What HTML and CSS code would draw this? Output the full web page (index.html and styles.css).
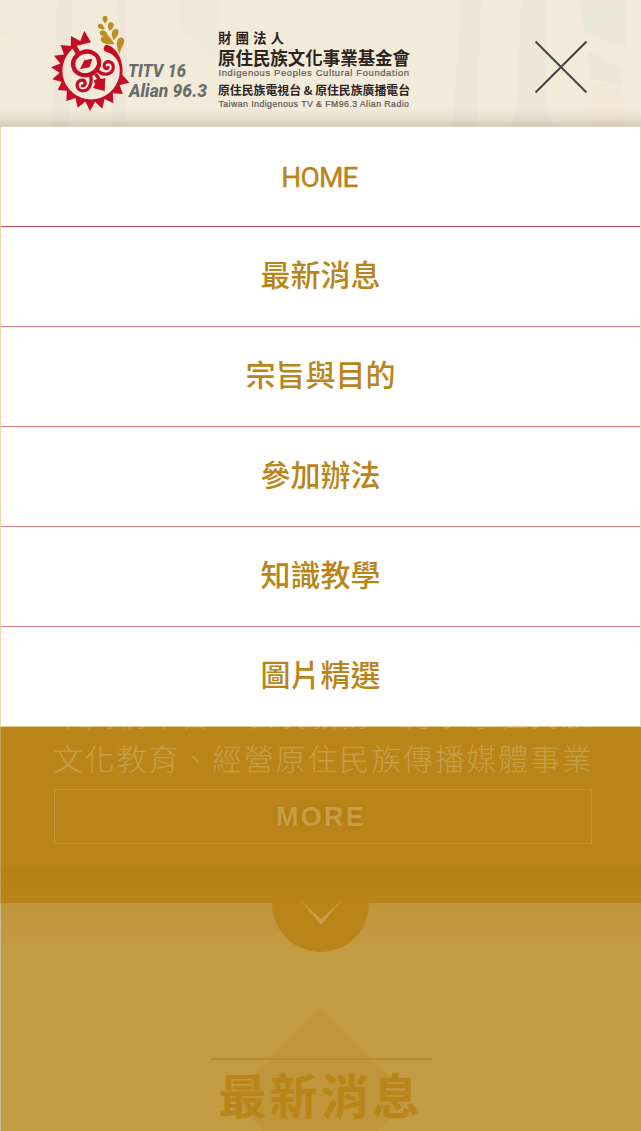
FILE: index.html
```html
<!DOCTYPE html>
<html lang="zh-Hant">
<head>
<meta charset="utf-8">
<title>原住民族文化事業基金會</title>
<link rel="stylesheet" href="styles.css">
</head>
<body>
<header class="header">
  <svg class="pattern" width="641" height="126" viewBox="0 0 641 126" aria-hidden="true">
    <g fill="#eee6d9">
      <path d="M57 0h15l-3 126H52zM117 0h10v126h-16zM461 0h20l-4 126h-24zM521 0h25l-1 98 9 28h-44l7-20zM579 0h46v49l-40-17zM587 50l37 20-2 16-31-8z"/>
      <path d="M178 0h42v58l-17-9-25-22z" opacity=".65"/>
    </g>
    <path d="M583 22l41-20v13l-40 18z" fill="#ebe9d9"/>
    <path d="M591 84h31l2 42h-33zM0 32l19 2v3H0zM0 43l15-3v3L0 48z" fill="#f3e7d6"/>
  </svg>
  <a class="logo" href="#">
    <svg width="370" height="105" viewBox="45 10 370 105" role="img" aria-label="TITV 16 Alian 96.3">
      <g fill="#c40d24">
        <path d="M91 42.3 84.3 30.7 80.2 41 71 36 70.7 46 60.7 45 64 54.4 54 55.7 60.3 63.5 51 67.3 59.6 72.8 52.3 79.3 61.6 81.9 57.7 90 66.9 90.8 66.3 101 75.5 98 77.7 107.7 85.3 101.6 90 111 95.1 101.8 102.3 108.7 104.6 99 113.3 103.3 112.9 93.2 122.8 94 119.6 85 129.5 82.7 122.4 75C124 62 118 49 108.5 45.2A3.4 3.4 0 0 0 106 51.8C114 54 120 61 119.8 70.5A28.7 28.7 0 1 1 77 45.7L91 42.3Z"/>
        <path d="M80 69 84.3 60.3 92.5 58.7 89.5 67.3zM93.8 80.5 97 79 94 75 97 73 101 79 105.2 78 104.7 91 93 88 95 84z"/>
      </g>
      <g fill="none" stroke="#c40d24" stroke-linecap="round">
        <ellipse cx="86.1" cy="63.4" rx="13.2" ry="11.7" stroke-width="4.3" transform="rotate(-18 86 63.4)"/>
        <path d="M74 46l4 7" stroke-width="5" stroke-linecap="butt"/>
        <path d="M98 71C104 76.5 113 74.5 113.3 67.3 113.5 60 104 60 104.2 65.6 104.3 69 107.3 69.2 108 67.4" stroke-width="3.2"/>
        <path d="M91 77C92 85 88.5 91 82.8 90.8 75.5 90.6 75.3 80.5 81.5 80.2 86 80 86.5 86 82.4 86" stroke-width="3.2"/>
      </g>
      <g fill="#c08c1d">
        <path d="M105 23.5C103 21 102.3 19.5 102.5 18a2.6 2.6 0 0 1 5.1 0c.2 2-.8 4-2.6 5.5zM105 29.3C101 29.5 98 28.5 97.8 26c-.1-2.4 2.8-3.4 5-.9zM109.5 30.5C107.4 27 107.3 23.5 109.5 22.5c2.5-.8 5 1 4.2 3.5-.5 2-2.3 3.5-4.2 4.5zM109 36.5C104 37 99.8 35.8 99.7 32.8c0-2.8 4-3.6 6.3-.7zM113.5 40.5C111 35 111.2 30 115 29.1c3.7-.5 4.6 3.2 2.4 6.7zM114.5 44C107 45 100.7 42.8 100.6 39.2c.1-3.8 7-4.3 10-.9zM119.8 54.2C116 46 115.7 39.5 120 37.5c4.2-.8 5.4 3.5 3 7.7-2 3.5-3 6-3.2 9z"/>
      </g>
      <g class="mark-name" fill="#6b6b6c">
        <text x="128" y="77" font-size="18.8" textLength="58" lengthAdjust="spacingAndGlyphs">TITV 16</text>
        <text x="129" y="96.5" font-size="18.8" textLength="78" lengthAdjust="spacingAndGlyphs">Alian 96.3</text>
      </g>
      <g class="org-name" fill="#2d2322">
        <text x="218" y="42.5" font-size="13.5" textLength="66">財團法人</text>
        <text x="218" y="64.5" font-size="18" textLength="192" lengthAdjust="spacingAndGlyphs">原住民族文化事業基金會</text>
        <text x="218" y="95.3" font-size="12" textLength="192" lengthAdjust="spacingAndGlyphs">原住民族電視台 &amp; 原住民族廣播電台</text>
      </g>
      <g class="org-latin" fill="#5c5651" stroke="#5c5651" stroke-width=".2">
        <text x="218.5" y="76" font-size="9.4" textLength="190.5">Indigenous Peoples Cultural Foundation</text>
        <text x="218.5" y="106.5" font-size="8.8" textLength="190.5">Taiwan Indigenous TV &amp; FM96.3 Alian Radio</text>
      </g>
    </svg>
  </a>
  <button class="close" aria-label="關閉">
    <svg width="54" height="54" viewBox="0 0 54 54"><path d="M1.5 1.5 52.5 52.5M52.5 1.5 1.5 52.5" stroke="#454545" stroke-width="2"/></svg>
  </button>
</header>
<nav class="menu">
  <a class="item home" href="#">HOME</a>
  <a class="item" href="#">最新消息</a>
  <a class="item" href="#">宗旨與目的</a>
  <a class="item" href="#">參加辦法</a>
  <a class="item" href="#">知識教學</a>
  <a class="item" href="#">圖片精選</a>
</nav>
<section class="about">
  <p class="copy">本高構平台，以及服務，傳承原住民族<br>文化教育、經營原住民族傳播媒體事業</p>
  <a class="more" href="#">MORE</a>
</section>
<section class="news">
  <div class="down"><svg width="42" height="25" viewBox="0 0 42 25"><path d="M0 0 21 19 42 0 21 25z" fill="#c89d45"/></svg></div>
  <svg class="diamond" width="180" height="123" viewBox="0 0 180 123"><path d="M90 0 180 90 147 123H33L0 90z" fill="#c1953a"/></svg>
  <h2 class="title">最新消息</h2>
</section>
</body>
</html>
```
FILE: styles.css
```css
* { box-sizing: border-box; }
body {
  margin: 0;
  height: 1131px;
  overflow: hidden;
  display: flex;
  flex-direction: column;
  background: #b98519;
  font-family: "Noto Sans CJK TC", "Liberation Sans", sans-serif;
}
a { color: inherit; text-decoration: none; }
.header {
  position: relative;
  flex: none;
  height: 127px;
  padding: 10px 53px 0 45px;
  display: flex;
  justify-content: space-between;
  background: #f3ebda;
  border-bottom: 1px solid #dcd2bd;
}
.header::after {
  content: "";
  position: absolute;
  inset: auto 0 0;
  height: 18px;
  background: linear-gradient(rgba(190, 180, 160, 0), rgba(190, 180, 160, .2) 55%, rgba(190, 180, 160, .6));
}
.pattern { position: absolute; left: 0; top: 0; }
.logo, .close { position: relative; }
.logo svg, .close svg { display: block; }
.close { margin-top: 30px; padding: 0; width: 54px; height: 54px; border: 0; background: none; }
.mark-name { font-family: Roboto, "Liberation Sans", sans-serif; font-weight: 800; font-style: italic; }
.org-name { font-weight: 700; }
.org-latin { font-family: "Liberation Sans", sans-serif; }
.menu {
  flex: none;
  background: #fff;
  border: solid #ead6a8;
  border-width: 0 1px;
  color: #b98519;
}
.item {
  display: flex;
  align-items: center;
  justify-content: center;
  height: 100px;
  padding: 0 0 8px;
  border-bottom: 1px solid #d98080;
  font-size: 30px;
  line-height: 44px;
  font-weight: 500;
}
.item:first-child { border-color: #ce4a50; }
.item:last-child { border-color: #e2cb98; }
.home {
  padding: 2px 2px 0 0;
  font-family: Roboto, "Liberation Sans", sans-serif;
  font-size: 28px;
  font-weight: 400;
  letter-spacing: -.8px;
  -webkit-text-stroke: .4px #b98519;
}
.about {
  flex: none;
  height: 176px;
  padding: 0 49px 0 53px;
  overflow: hidden;
  border-left: 1px solid #c8a055;
  background: linear-gradient(#b98519 139px, #b58218 140px, #b88419 176px);
}
.copy {
  margin: -36px 0 0 -1px;
  color: #c89e48;
  font-size: 30px;
  line-height: 44px;
  font-weight: 300;
  letter-spacing: 1.8px;
  white-space: nowrap;
}
.more {
  display: flex;
  align-items: center;
  justify-content: center;
  width: 538px;
  height: 55px;
  margin-top: 10px;
  padding: 2px 4px 0 0;
  border: 1px solid #c39638;
  color: #c89d45;
  font: 700 27px "Liberation Sans", sans-serif;
  letter-spacing: 2.2px;
  text-shadow: 0 0 5px #a87612;
}
.news {
  position: relative;
  flex: 1;
  display: flex;
  flex-direction: column;
  align-items: center;
  padding-right: 1px;
  border-left: 1px solid #cbbb91;
  background: linear-gradient(#bf943b, #c39b42 45px);
}
.down {
  width: 97px;
  height: 49px;
  display: flex;
  justify-content: center;
  border-radius: 0 0 49px 49px;
  background: #b98519;
}
.down svg { margin-top: -3px; overflow: visible; }
.diamond { position: absolute; left: 230px; bottom: 0; }
.title {
  position: relative;
  width: 222px;
  margin: 106px 0 0;
  border-top: 2px solid #b48a30;
  color: #b98519;
  font-size: 48px;
  line-height: 66px;
  font-weight: 700;
  letter-spacing: 3px;
  text-align: center;
  white-space: nowrap;
}
```
